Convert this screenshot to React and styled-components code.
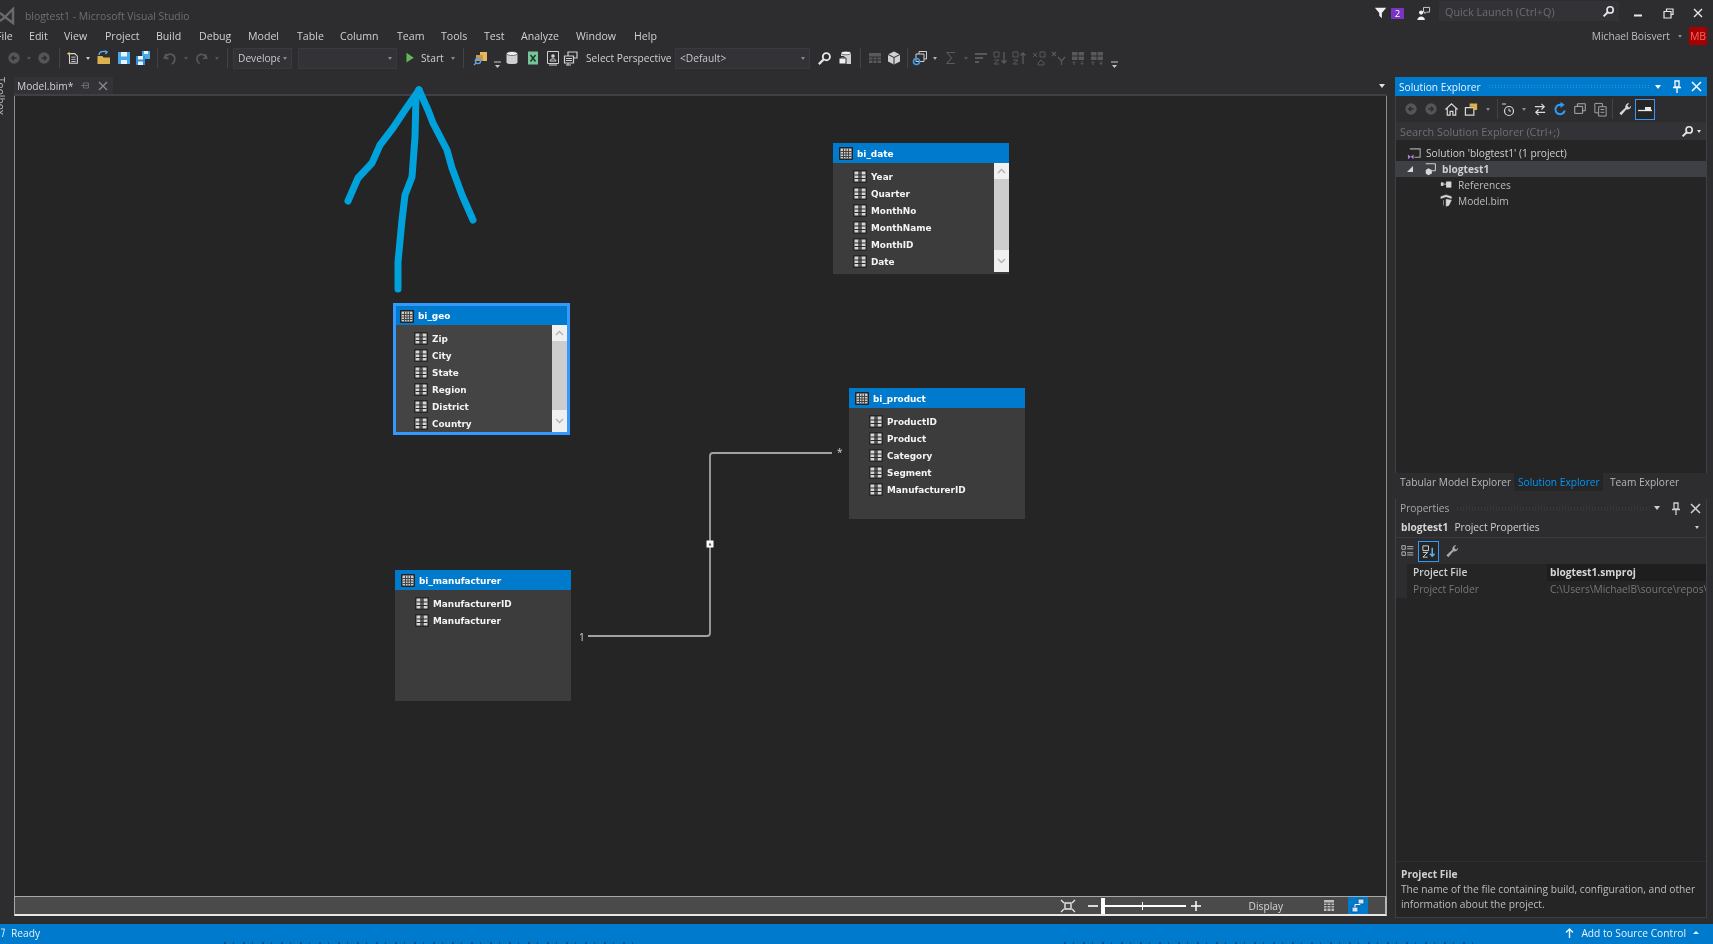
import React from 'react';
import styled, { createGlobalStyle } from 'styled-components';

const Global = createGlobalStyle`
  html, body { margin: 0; padding: 0; background: #2d2d30; overflow: hidden; }
  * { box-sizing: border-box; }
`

const Window = styled.div`
  position: relative;
  width: 1713px;
  height: 944px;
  display: flex;
  flex-direction: column;
  overflow: hidden;
  background: #2d2d30;
  color: #d0d0d0;
  font-family: "Open Sans", "Noto Sans", sans-serif;
  font-size: 10.2px;
  filter: blur(0.35px);
`

const TitleBar = styled.div`
  height: 26px;
  display: flex;
  align-items: center;
  flex-shrink: 0;
`

const Logo = styled.svg`
  width: 15px;
  height: 18px;
  margin: 6px 10px 0 0;
  flex-shrink: 0;
`

const AppTitle = styled.div`
  color: #6f6f72;
  font-size: 10.4px;
  margin-top: 6px;
  flex: 1;
`

const NotifyBadge = styled.span`
  width: 13px;
  height: 11px;
  margin: 0 12px 0 3px;
  background: #7b33c4;
  color: #fff;
  font-size: 9.5px;
  line-height: 11px;
  text-align: center;
`

const QuickLaunch = styled.div`
  width: 180px;
  height: 20px;
  margin: 0 0 4px 8px;
  padding: 0 4px 0 6px;
  display: flex;
  align-items: center;
  justify-content: space-between;
  background: #333337;
  color: #6d6d70;
  font-size: 10.8px;
`

const WindowButton = styled.div`
  width: 30px;
  height: 22px;
  display: flex;
  align-items: center;
  justify-content: center;
`

const MenuBar = styled.div`
  height: 20px;
  display: flex;
  align-items: center;
  flex-shrink: 0;
`

const MenuItem = styled.div`
  width: ${p => p.$w}px;
  color: #d0d0d0;
  font-size: 10.6px;
  white-space: nowrap;
`

const Account = styled.div`
  margin-left: auto;
  display: flex;
  align-items: center;
  margin-right: 6px;
  color: #bdbdbd;
`

const Avatar = styled.div`
  width: 18px;
  height: 18px;
  margin-left: 7px;
  background: #a80000;
  color: #ee6a62;
  font-size: 10.5px;
  line-height: 18px;
  text-align: center;
`

const Toolbar = styled.div`
  height: 24px;
  padding-left: 6px;
  display: flex;
  align-items: center;
  flex-shrink: 0;
`

const Slot = styled.div`
  width: ${p => p.$w}px;
  height: 20px;
  display: flex;
  align-items: center;
  justify-content: center;
  flex-shrink: 0;
`

const Sep = styled.div`
  width: ${p => p.$w || 8}px;
  height: 20px;
  flex-shrink: 0;
  display: flex;
  justify-content: center;
  &::after {
    content: '';
    width: 1px;
    background: #434346;
  }
`

const Caret = styled.span`
  width: 0;
  height: 0;
  flex-shrink: 0;
  border-left: 2.5px solid transparent;
  border-right: 2.5px solid transparent;
  border-top: 3px solid ${p => p.$c || '#8a8a8a'};
`

const Combo = styled.div`
  width: ${p => p.$w}px;
  height: 21px;
  margin-left: ${p => p.$ml || 0}px;
  padding: 0 4px 0 4px;
  display: flex;
  align-items: center;
  justify-content: space-between;
  flex-shrink: 0;
  background: #333337;
  border: 1px solid #3a3a3e;
  color: #c8c8c8;
  overflow: hidden;
`

const ToolLabel = styled.div`
  width: ${p => p.$w}px;
  flex-shrink: 0;
  color: #d0d0d0;
  white-space: nowrap;
`

const Main = styled.div`
  flex: 1;
  min-height: 0;
  display: flex;
  padding-top: 7px;
  padding-bottom: 6px;
`

const ToolboxStrip = styled.div`
  width: 14px;
  flex-shrink: 0;
  overflow: hidden;
  color: #bdbdbd;
  writing-mode: vertical-rl;
  padding-right: 6px;
`

const DocArea = styled.div`
  width: 1373px;
  margin-bottom: 2px;
  display: flex;
  flex-direction: column;
`

const TabStrip = styled.div`
  height: 19px;
  flex-shrink: 0;
  display: flex;
  align-items: flex-start;
  justify-content: space-between;
  border-bottom: 2px solid #3f3f46;
`

const DocTab = styled.div`
  width: 99px;
  height: 17px;
  padding-left: 3px;
  display: flex;
  align-items: center;
  gap: 7px;
  background: #333337;
  color: #d0d0d0;
`

const Canvas = styled.div`
  position: relative;
  flex: 1;
  background: #252525;
  border-left: 1px solid #8c8c8c;
  border-right: 1px solid #8c8c8c;
`

const ModelBar = styled.div`
  height: 20px;
  flex-shrink: 0;
  display: flex;
  align-items: center;
  background: #4a4a4a;
  border: 1px solid #a8a8a8;
  border-bottom: 2px solid #e6e6e6;
  border-right: 2px solid #b5b5b5;
  padding-right: 17px;
  justify-content: flex-end;
  color: #d6d6d6;
`

const Slider = styled.div`
  position: relative;
  width: 85px;
  height: 2px;
  margin: 0 3px 0 3px;
  background: #fff;
  &::before {
    content: '';
    position: absolute;
    left: 0;
    top: -7px;
    width: 4px;
    height: 16px;
    background: #fff;
  }
  &::after {
    content: '';
    position: absolute;
    left: 41px;
    top: -3px;
    width: 1px;
    height: 8px;
    background: #fff;
  }
`

const ViewButton = styled.div`
  width: 20px;
  height: 17px;
  margin-left: ${p => p.$ml || 0}px;
  display: flex;
  align-items: center;
  justify-content: center;
  background: ${p => (p.$active ? '#007acc' : 'transparent')};
`

const Node = styled.div`
  position: absolute;
  left: ${p => p.$x}px;
  top: ${p => p.$y}px;
  width: ${p => p.$w}px;
  height: ${p => p.$h}px;
  display: flex;
  flex-direction: column;
  border: ${p => (p.$selected ? '3px solid #3399ff' : 'none')};
  background: ${p => (p.$selected ? '#444' : '#3c3c3c')};
  font-family: "DejaVu Sans", sans-serif;
  font-size: 8.9px;
  font-weight: bold;
  color: #f4f4f4;
`

const NodeHeader = styled.div`
  height: ${p => (p.$selected ? 19 : 20)}px;
  flex-shrink: 0;
  display: flex;
  align-items: center;
  padding-left: ${p => (p.$selected ? 4 : 6)}px;
  padding-top: 1px;
  gap: 4px;
  background: #007acc;
  color: #fff;
`

const NodeBody = styled.div`
  flex: 1;
  min-height: 0;
  display: flex;
`

const FieldList = styled.div`
  flex: 1;
  padding: 5px 0 0 ${p => (p.$selected ? 18 : 20)}px;
`

const Field = styled.div`
  height: 17px;
  display: flex;
  align-items: center;
  gap: 4px;
  white-space: nowrap;
`

const ScrollBar = styled.div`
  width: 15px;
  margin-bottom: ${p => (p.$selected ? 0 : 2)}px;
  display: flex;
  flex-direction: column;
  justify-content: space-between;
  background: #cdcdcd;
  flex-shrink: 0;
`

const ScrollButton = styled.div`
  height: ${p => p.$h}px;
  display: flex;
  align-items: center;
  justify-content: center;
  background: #f0f0f0;
`

const Cardinality = styled.div`
  position: absolute;
  left: ${p => p.$x}px;
  top: ${p => p.$y}px;
  color: #d8d8d8;
  font-size: 10px;
  line-height: 12px;
`

const Overlay = styled.svg`
  position: absolute;
  left: ${p => p.$x}px;
  top: ${p => p.$y}px;
  pointer-events: none;
  overflow: visible;
`

const SidePanels = styled.div`
  width: 312px;
  margin-left: 8px;
  display: flex;
  flex-direction: column;
  flex-shrink: 0;
`

const PanelTitle = styled.div`
  height: ${p => p.$h}px;
  flex-shrink: 0;
  display: flex;
  align-items: center;
  gap: 6px;
  padding: 0 5px 0 4px;
  background: ${p => (p.$active ? '#007acc' : '#2d2d30')};
  color: ${p => (p.$active ? '#e8f4ff' : '#a8a8a8')};
  font-size: 10.2px;
`

const Grip = styled.div`
  flex: 1;
  height: 5px;
  margin-left: 1px;
  background-image: radial-gradient(${p => (p.$active ? '#3f9cda' : '#46464a')} 0.8px, transparent 0.9px);
  background-size: 3px 2.5px;
`

const ExplorerBox = styled.div`
  height: 377px;
  flex-shrink: 0;
  display: flex;
  flex-direction: column;
  border-left: 1px solid #3f3f46;
  border-right: 1px solid #3f3f46;
`

const PanelTools = styled.div`
  height: ${p => p.$h}px;
  flex-shrink: 0;
  display: flex;
  align-items: center;
  padding-left: ${p => p.$pl || 0}px;
  background: #2d2d30;
`

const SelectedTool = styled(Slot)`
  border: 1px solid #3399ff;
  background: #252526;
  height: 21px;
`

const SearchBox = styled.div`
  height: 18px;
  flex-shrink: 0;
  display: flex;
  align-items: center;
  justify-content: space-between;
  padding: 0 5px 0 4px;
  background: #333337;
  color: #707073;
  font-size: 10.8px;
`

const Tree = styled.div`
  flex: 1;
  background: #252526;
  padding-top: 5px;
`

const TreeRow = styled.div`
  height: 16px;
  display: flex;
  align-items: center;
  gap: 4px;
  padding-left: ${p => p.$indent}px;
  background: ${p => (p.$current ? '#3f3f46' : 'transparent')};
  color: ${p => (p.$dim ? '#bdbdbd' : '#d0d0d0')};
  font-weight: ${p => (p.$current ? 700 : 400)};
`

const ExplorerTabs = styled.div`
  height: 19px;
  flex-shrink: 0;
  display: flex;
  align-items: flex-start;
  padding-left: 1px;
`

const ExplorerTab = styled.div`
  width: ${p => p.$w}px;
  height: 18px;
  padding-left: ${p => p.$pl}px;
  line-height: 18px;
  color: ${p => (p.$active ? '#0097fb' : '#b8b8b8')};
  background: ${p => (p.$active ? '#252526' : '#2d2d30')};
  white-space: nowrap;
`

const PropertiesBox = styled.div`
  flex: 1;
  margin-top: 7px;
  display: flex;
  flex-direction: column;
  border-left: 1px solid #3f3f46;
  border-right: 1px solid #3f3f46;
  border-bottom: 1px solid #3f3f46;
  min-height: 0;
`

const ObjectPicker = styled.div`
  height: 21px;
  flex-shrink: 0;
  display: flex;
  align-items: center;
  gap: 6px;
  padding: 0 7px 0 5px;
  background: #2d2d30;
  border-bottom: 1px solid #3a3a3e;
  b { color: #d6d6d6; }
`

const Grid = styled.div`
  flex: 1;
  display: grid;
  grid-template-columns: 150px 1fr;
  grid-auto-rows: 17px;
  align-content: start;
  background: #252526;
`

const PropName = styled.div`
  padding-left: 17px;
  line-height: 17px;
  white-space: nowrap;
  background: linear-gradient(90deg, #2d2d30 11px, #252526 11px);
  color: ${p => (p.$dim ? '#777' : '#cfcfcf')};
  font-weight: ${p => (p.$dim ? 400 : 600)};
`

const PropValue = styled.div`
  padding-left: 3px;
  margin-left: 1px;
  line-height: 17px;
  overflow: hidden;
  white-space: nowrap;
  background: ${p => (p.$dim ? '#252526' : '#1e1e1e')};
  color: ${p => (p.$dim ? '#777' : '#d6d6d6')};
  font-weight: ${p => (p.$dim ? 400 : 700)};
`

const Description = styled.div`
  height: 56px;
  flex-shrink: 0;
  padding: 5px 5px 0 5px;
  background: #252526;
  border-top: 1px solid #2f2f33;
  line-height: 14.5px;
  color: #bdbdbd;
  b { display: block; color: #d0d0d0; line-height: 15px; }
`

const StatusBar = styled.div`
  position: relative;
  height: 20px;
  flex-shrink: 0;
  display: flex;
  align-items: center;
  justify-content: space-between;
  padding: 0 14px 3px 1px;
  background: #007acc;
  color: #e6f3fb;
`

const StatusLeft = styled.div`
  display: flex;
  align-items: center;
  gap: 6px;
`

const SourceControl = styled.div`
  display: flex;
  align-items: center;
  gap: 7px;
`

const ClippedLine = styled.div`
  position: absolute;
  left: ${p => p.$x}px;
  bottom: 0;
  width: ${p => p.$w}px;
  height: 2px;
  background: repeating-linear-gradient(90deg, #0d4f80 0 2px, transparent 2px 9px, #0d4f80 9px 10px, transparent 10px 19px);
`

const Svg = ({ size = 16, vb = '0 0 16 16', children }) => (
  <svg width={size} height={size} viewBox={vb} fill="none">{children}</svg>
)

const Circle = ({ dir }) => (
  <Svg size={14}>
    <circle cx="8" cy="8" r="6.5" fill="#555558" />
    <path d={dir === 'left' ? 'M11 8H6M8 5.5L5.5 8 8 10.5' : 'M5 8h5M8 5.5L10.5 8 8 10.5'} stroke="#2d2d30" strokeWidth="1.6" />
  </Svg>
)

const NewProject = () => (
  <Svg>
    <path d="M4 3h6l3 3v8H4z" fill="#2d2d30" stroke="#d8d8d8" strokeWidth="1.2" />
    <path d="M6 7h5M6 9.5h5M6 12h5" stroke="#d8d8d8" />
    <path d="M3.5 1v4M1.5 3h4" stroke="#e8c070" strokeWidth="1.2" />
  </Svg>
)

const OpenFolder = () => (
  <Svg>
    <path d="M1.5 6h5l1 1.5h6.5v6.5h-12.5z" fill="#dcb14e" />
    <path d="M3 5c0-3 3-4 6-3.5M9 1l2 1-1.5 2" stroke="#58b4e8" strokeWidth="1.4" />
  </Svg>
)

const Floppy = () => (
  <Svg>
    <path d="M2 2h12v12H2z" fill="#4aa8e8" />
    <path d="M5 2h6v4.5H5zM5 10h6v4H5z" fill="#e8f4ff" />
  </Svg>
)

const FloppyAll = () => (
  <Svg>
    <path d="M7 1h8v8H7z" fill="#4aa8e8" />
    <path d="M9 1h4v3H9z" fill="#e8f4ff" />
    <path d="M1 6h9v9H1z" fill="#2f8fd8" />
    <path d="M3 6h5v3.500H3zM3 11.500h5V15H3z" fill="#e8f4ff" />
  </Svg>
)

const Turn = ({ flip }) => (
  <Svg>
    <path
      d={flip ? 'M12 4l1.500 4-4 .5M13 8c-1-4-6-5-8.500-2.500S3 12 6 14' : 'M4 4l-1.500 4 4 .5M3 8c1-4 6-5 8.500-2.500S13 12 10 14'}
      stroke="#59595c"
      strokeWidth="1.8"
    />
  </Svg>
)

const Play = () => (
  <Svg size={13}>
    <path d="M3 1l9 6-9 6z" fill="#63b657" />
  </Svg>
)

const OverflowMark = () => (
  <Slot $w={16} style={{ alignItems: 'flex-end' }}>
    <svg width="8" height="8" viewBox="0 0 8 8">
      <path d="M0 2h7" stroke="#c8c8c8" />
      <path d="M1 5h5L3.500 8z" fill="#c8c8c8" />
    </svg>
  </Slot>
)

const ProcessIcon = () => (
  <Svg>
    <path d="M7 2h7v9H7z" fill="#e8b860" />
    <path d="M3 5h7v6H3z" fill="#c89848" />
    <circle cx="5" cy="11" r="2.600" stroke="#58a4e8" strokeWidth="1.400" />
    <path d="M3 13l-2 2" stroke="#58a4e8" strokeWidth="1.400" />
  </Svg>
)

const Database = () => (
  <Svg>
    <path d="M2.500 3.500v9c0 2 11 2 11 0v-9z" fill="#d0d0d0" />
    <ellipse cx="8" cy="3.500" rx="5.500" ry="2" fill="#f0f0f0" stroke="#2d2d30" strokeWidth=".6" />
  </Svg>
)

const Excel = () => (
  <Svg>
    <path d="M3 1.500h10v13H3z" fill="#77c49a" />
    <path d="M5.500 5l5 6.500M10.500 5l-5 6.500" stroke="#1e3a2a" strokeWidth="1.500" />
  </Svg>
)

const Screen = () => (
  <Svg>
    <path d="M2.500 1.500h11v12h-11z" stroke="#d0d0d0" />
    <circle cx="8" cy="6" r="1.800" fill="#d0d0d0" />
    <path d="M5 11c0-3 6-3 6 0zM4 15h8" stroke="#d0d0d0" />
  </Svg>
)

const Stack = () => (
  <Svg>
    <path d="M5 2h9v6H5z" stroke="#d0d0d0" strokeWidth="1.200" />
    <path d="M1.500 6h9v7h-9z" fill="#2d2d30" stroke="#d0d0d0" strokeWidth="1.200" />
    <path d="M3 8.500h6M3 10.500h6M5 13v2M3 15h5" stroke="#d0d0d0" />
  </Svg>
)

const Magnifier = ({ c = '#e6e6e6', size = 15 }) => (
  <Svg size={size}>
    <circle cx="10" cy="6" r="3.800" stroke={c} strokeWidth="2" />
    <path d="M7 9l-5 5" stroke={c} strokeWidth="2.400" />
  </Svg>
)

const DbLock = () => (
  <Svg>
    <path d="M3 3h10v11H3z" fill="#d0d0d0" />
    <ellipse cx="8" cy="3" rx="5" ry="1.800" fill="#f0f0f0" stroke="#2d2d30" strokeWidth=".6" />
    <path d="M1 8h7v6H1z" fill="#f0f0f0" stroke="#2d2d30" />
    <path d="M3 8V6.500h3V8" stroke="#2d2d30" />
  </Svg>
)

const DimGrid = () => (
  <Svg>
    <path d="M2 3h12v10H2z" fill="#5a5a5d" />
    <path d="M2 7h12M2 10h12M6 7v6M10 7v6" stroke="#2d2d30" />
  </Svg>
)

const Cube = () => (
  <Svg>
    <path d="M8 1.500l6 3v7l-6 3-6-3v-7z" fill="#d0d0d0" />
    <path d="M2 4.500l6 3 6-3M8 7.500v7" stroke="#2d2d30" />
  </Svg>
)

const Layers = () => (
  <Svg>
    <path d="M7 1.500h7.500V9H7z" stroke="#d0d0d0" />
    <path d="M4 4h8v7.500H4z" fill="#2d2d30" stroke="#d0d0d0" />
    <circle cx="4.500" cy="11.500" r="3" stroke="#3f9ae8" strokeWidth="1.600" />
  </Svg>
)

const Sigma = () => (
  <Svg>
    <path d="M12 2.500H4l4.500 5.500L4 13.500h8" stroke="#59595c" strokeWidth="1.100" />
  </Svg>
)

const DimBars = () => (
  <Svg>
    <path d="M2 4h12M2 8h8M2 12h4" stroke="#59595c" strokeWidth="2" />
  </Svg>
)

const DimSort = ({ flip }) => (
  <Svg>
    <path d="M2 2h5v5H2z" stroke="#59595c" />
    <path d="M2 10h5l-5 4h5" stroke="#59595c" />
    <path d={flip ? 'M12 14V3M9.500 5.500L12 3l2.500 2.500' : 'M12 2v11M9.500 10.500L12 13l2.500-2.500'} stroke="#59595c" strokeWidth="1.400" />
  </Svg>
)

const DimXY = () => (
  <Svg>
    <path d="M2 3l4 4M6 3L2 7M9 2h5v5H9zM7 13l3-3 3 3v2H7z" stroke="#59595c" />
  </Svg>
)

const DimY = () => (
  <Svg>
    <path d="M2 2l4 4M6 2L2 6M8 7l3.500 4L15 7M11.500 11v4" stroke="#59595c" strokeWidth="1.200" />
  </Svg>
)

const DimTable = () => (
  <Svg>
    <path d="M2 2h12v8H2z" fill="#59595c" />
    <path d="M2 6h12M8 2v8" stroke="#2d2d30" />
    <path d="M4 15v-3M2.500 13L4 11.500 5.500 13M12 11v3M10.500 13l1.500 1.500 1.500-1.500" stroke="#59595c" />
  </Svg>
)

const Filter = () => (
  <Svg size={14}>
    <path d="M1 2h13L9 8v6L6 11V8z" fill="#f0f0f0" />
  </Svg>
)

const Person = () => (
  <Svg size={15}>
    <circle cx="5.500" cy="7" r="2.300" fill="#f0f0f0" />
    <path d="M1.500 15c0-5 8-5 8 0z" fill="#f0f0f0" />
    <path d="M8 1.500h6.500v5H11l-1.500 1.500V6.500H8z" stroke="#d0d0d0" />
  </Svg>
)

// dark frame, two light columns and a darker one between them
const ColumnIcon = () => (
  <svg width="14" height="13" viewBox="0 0 14 13" style={{ flexShrink: 0 }}>
    <rect width="14" height="13" rx="1" fill="#262626" />
    <path d="M1.500 1.500h4v10h-4zM8.500 1.500h4v10h-4z" fill="#d6d6d6" />
    <path d="M5.500 1.500h3v10h-3z" fill="#555" />
    <path d="M1.500 5h11M1.500 8.500h11" stroke="#2a2a2a" />
  </svg>
)

const TableIcon = () => (
  <svg width="14" height="13" viewBox="0 0 14 13" style={{ flexShrink: 0 }}>
    <rect width="14" height="13" rx="1" fill="#222" />
    <rect x="1.500" y="1.500" width="11" height="10" fill="#cfcfcf" />
    <path d="M1.500 4.500h11M1.500 7h11M1.500 9.500h11M4.500 1.500v10M7 1.500v10M9.500 1.500v10" stroke="#444" />
  </svg>
)

const Chevron = ({ down }) => (
  <svg width="9" height="6" viewBox="0 0 9 6">
    <path d={down ? 'M1 1l3.500 3.500L8 1' : 'M1 5l3.500-3.500L8 5'} stroke="#b0b0b0" strokeWidth="1.300" fill="none" />
  </svg>
)

const PanelButtons = ({ c }) => (
  <>
    <Caret $c={c} style={{ borderWidth: '4px 3.500px 0' }} />
    <svg width="12" height="13" viewBox="0 0 12 13" style={{ margin: '0 0 0 4px' }}>
      <path d="M4 1h4v6H4zM2 7.500h8M6 8v5" stroke={c} strokeWidth="1.300" fill="none" />
    </svg>
    <svg width="11" height="11" viewBox="0 0 11 11" style={{ margin: '0 0 0 2px' }}>
      <path d="M1 1l9 9M10 1l-9 9" stroke={c} strokeWidth="1.500" />
    </svg>
  </>
)

const ModelTable = ({ name, fields, x, y, h = 131, w = 176, scroll, selected }) => (
  <Node $x={x - 15} $y={y - 96} $w={w} $h={h} $selected={selected}>
    <NodeHeader $selected={selected}><TableIcon />{name}</NodeHeader>
    <NodeBody>
      <FieldList $selected={selected}>
        {fields.map(f => <Field key={f}><ColumnIcon />{f}</Field>)}
      </FieldList>
      {scroll && (
        <ScrollBar $selected={selected}>
          <ScrollButton $h={16}><Chevron /></ScrollButton>
          <ScrollButton $h={22}><Chevron down /></ScrollButton>
        </ScrollBar>
      )}
    </NodeBody>
  </Node>
)

const menus = [
  ['File', 33], ['Edit', 35], ['View', 41], ['Project', 51], ['Build', 43], ['Debug', 49], ['Model', 49],
  ['Table', 43], ['Column', 57], ['Team', 44], ['Tools', 43], ['Test', 37], ['Analyze', 55], ['Window', 58], ['Help', 40],
]

function App() {
  return (
    <Window>
      <Global />

      <TitleBar>
        <Logo viewBox="0 0 15 18">
          <path d="M0 6l5 4 8-8v14L5 10 0 14" stroke="#6a6a6d" strokeWidth="2.400" fill="none" />
        </Logo>
        <AppTitle>blogtest1 - Microsoft Visual Studio</AppTitle>
        <Filter />
        <NotifyBadge>2</NotifyBadge>
        <Person />
        <QuickLaunch>Quick Launch (Ctrl+Q)<Magnifier size={13} /></QuickLaunch>
        <WindowButton style={{ marginLeft: 4 }}>
          <svg width="10" height="10" viewBox="0 0 10 10"><path d="M1 7.500h8" stroke="#e8e8e8" strokeWidth="2" /></svg>
        </WindowButton>
        <WindowButton>
          <svg width="11" height="11" viewBox="0 0 11 11" fill="none"><path d="M3.500 3V1h6.500v5.500H8M1 3.500h7v6.500H1z" stroke="#e8e8e8" strokeWidth="1.200" /></svg>
        </WindowButton>
        <WindowButton>
          <svg width="10" height="10" viewBox="0 0 10 10"><path d="M1 1l8 8M9 1L1 9" stroke="#e8e8e8" strokeWidth="1.400" /></svg>
        </WindowButton>
      </TitleBar>

      <MenuBar>
        {menus.map(([label, w], i) => (
          <MenuItem key={label} $w={w} style={i === 0 ? { marginLeft: -4 } : undefined}>{label}</MenuItem>
        ))}
        <Account>
          Michael Boisvert
          <Caret style={{ marginLeft: 8 }} />
          <Avatar>MB</Avatar>
        </Account>
      </MenuBar>

      <Toolbar>
        <Slot $w={16}><Circle dir="left" /></Slot>
        <Slot $w={14}><Caret $c="#555" /></Slot>
        <Slot $w={16}><Circle dir="right" /></Slot>
        <Sep $w={14} />
        <Slot $w={14}><NewProject /></Slot>
        <Slot $w={15}><Caret $c="#c8c8c8" /></Slot>
        <Slot $w={18}><OpenFolder /></Slot>
        <Slot $w={21}><Floppy /></Slot>
        <Slot $w={18}><FloppyAll /></Slot>
        <Sep $w={10} />
        <Slot $w={16}><Turn /></Slot>
        <Slot $w={16}><Caret $c="#555" /></Slot>
        <Slot $w={15}><Turn flip /></Slot>
        <Slot $w={15}><Caret $c="#555" /></Slot>
        <Sep $w={6} />
        <Combo $w={59} $ml={3}><span style={{ width: 42, overflow: 'hidden' }}>Developer</span><Caret /></Combo>
        <Combo $w={99} $ml={6}><span /><Caret /></Combo>
        <Slot $w={22} style={{ marginLeft: 2 }}><Play /></Slot>
        <ToolLabel $w={30}>Start</ToolLabel>
        <Caret />
        <Sep $w={17} />
        <Slot $w={18}><ProcessIcon /></Slot>
        <OverflowMark />
        <Slot $w={22} style={{ marginLeft: -5 }}><Database /></Slot>
        <Slot $w={20}><Excel /></Slot>
        <Slot $w={19}><Screen /></Slot>
        <Slot $w={18}><Stack /></Slot>
        <ToolLabel $w={89} style={{ marginLeft: 6 }}>Select Perspective</ToolLabel>
        <Combo $w={135}>{'<Default>'}<Caret /></Combo>
        <Slot $w={24} style={{ marginLeft: 2 }}><Magnifier /></Slot>
        <Slot $w={20}><DbLock /></Slot>
        <Sep $w={9} />
        <Slot $w={20}><DimGrid /></Slot>
        <Slot $w={18}><Cube /></Slot>
        <Sep $w={8} />
        <Slot $w={18}><Layers /></Slot>
        <Slot $w={12}><Caret $c="#b0b0b0" /></Slot>
        <Slot $w={19}><Sigma /></Slot>
        <Slot $w={11}><Caret $c="#555" /></Slot>
        <Slot $w={19}><DimBars /></Slot>
        <Slot $w={19.5}><DimSort /></Slot>
        <Slot $w={19.5}><DimSort flip /></Slot>
        <Slot $w={19.5}><DimXY /></Slot>
        <Slot $w={19.5}><DimY /></Slot>
        <Slot $w={19.5}><DimTable /></Slot>
        <Slot $w={19.5}><DimTable /></Slot>
        <OverflowMark />
      </Toolbar>

      <Main>
        <ToolboxStrip>Toolbox</ToolboxStrip>

        <DocArea>
          <TabStrip>
            <DocTab>
              Model.bim*
              <svg width="11" height="11" viewBox="0 0 11 11"><path d="M1 5.500h2M3.500 3h5v5h-5zM3.500 5.500h5" stroke="#6a6a6e" fill="none" /></svg>
              <svg width="10" height="10" viewBox="0 0 10 10"><path d="M1 1l8 8M9 1L1 9" stroke="#8a8a8e" strokeWidth="1.300" /></svg>
            </DocTab>
            <Caret $c="#e0e0e0" style={{ marginTop: 7, marginRight: 2, borderWidth: '4px 3.500px 0' }} />
          </TabStrip>

          <Canvas>
            <Overlay $x={1} $y={0} width="1370" height="640">
              <path d="M572 540H691Q694 540 694 537V360Q694 357 697 357H816" stroke="#a2a2a2" strokeWidth="1.800" fill="none" />
              <rect x="690.500" y="444.500" width="7" height="7" fill="#fff" />
              <path d="M692.500 449.500l1.500-3 1.500 3z" fill="#555" />
            </Overlay>
            <Cardinality $x={564} $y={535}>1</Cardinality>
            <Cardinality $x={822} $y={350}>*</Cardinality>

            <ModelTable name="bi_date" x={833} y={143} scroll fields={['Year', 'Quarter', 'MonthNo', 'MonthName', 'MonthID', 'Date']} />
            <ModelTable name="bi_geo" x={393} y={303} w={177} h={132} scroll selected fields={['Zip', 'City', 'State', 'Region', 'District', 'Country']} />
            <ModelTable name="bi_product" x={849} y={388} fields={['ProductID', 'Product', 'Category', 'Segment', 'ManufacturerID']} />
            <ModelTable name="bi_manufacturer" x={395} y={570} fields={['ManufacturerID', 'Manufacturer']} />

            {/* the hand drawn arrow, it pokes up over the tab strip */}
            <Overlay $x={0} $y={0} width="500" height="220">
              <g transform="translate(315 -16)" stroke="#00a2dc" strokeWidth="7" strokeLinecap="round" strokeLinejoin="round" fill="none">
                <path d="M68 209V182L72 140L75 115L82 97L85 57L86 17L89 10" />
                <path d="M18 121L28 98L42 83L50 65L63 48L75 30L89 10" />
                <path d="M89 10L98 30L103 43L117 70L122 88L132 115L143 140" />
              </g>
            </Overlay>
          </Canvas>

          <ModelBar>
            <svg width="16" height="14" viewBox="0 0 16 14" fill="none" style={{ marginRight: 12 }}>
              <path d="M1 1l3 3M15 1l-3 3M1 13l3-3M15 13l-3-3" stroke="#e8e8e8" strokeWidth="1.200" />
              <path d="M5 4h6v6H5z" stroke="#e8e8e8" strokeWidth="1.400" />
            </svg>
            <svg width="10" height="10" viewBox="0 0 10 10"><path d="M0 5h10" stroke="#fff" strokeWidth="1.600" /></svg>
            <Slider />
            <svg width="10" height="10" viewBox="0 0 10 10" style={{ marginLeft: 2 }}><path d="M0 5h10M5 0v10" stroke="#fff" strokeWidth="1.500" /></svg>
            <span style={{ margin: '0 36px 0 48px' }}>Display</span>
            <ViewButton>
              <svg width="12" height="13" viewBox="0 0 12 13"><path d="M1 1h10v11H1z" fill="#bdbdbd" /><path d="M1 4h10M1 6.500h10M1 9h10M4 4v8M8 4v8" stroke="#4a4a4a" /></svg>
            </ViewButton>
            <ViewButton $active $ml={9}>
              <svg width="14" height="15" viewBox="0 0 14 15" fill="none"><path d="M7 1h6v5H7zM1 9h6v5H1z" fill="#cfe6f6" stroke="#0a5f9c" /><path d="M4 9V6.500h5V6" stroke="#fff" /></svg>
            </ViewButton>
          </ModelBar>
        </DocArea>

        <SidePanels>
          <PanelTitle $h={19} $active>
            Solution Explorer
            <Grip $active />
            <PanelButtons c="#fff" />
          </PanelTitle>

          <ExplorerBox>
            <PanelTools $h={26} $pl={5}>
              <Slot $w={20}><Circle dir="left" /></Slot>
              <Slot $w={20}><Circle dir="right" /></Slot>
              <Slot $w={20}>
                <Svg size={15}><path d="M1.500 8L8 2l6.500 6M3.500 7v7h3v-4h3v4h3V7" stroke="#d8d8d8" strokeWidth="1.300" /></Svg>
              </Slot>
              <Slot $w={20}>
                <Svg size={15}><path d="M1.500 6h9v8h-9z" stroke="#d8d8d8" strokeWidth="1.300" /><path d="M6 1.500h8v7H10V5H6z" fill="#dcb14e" /></Svg>
              </Slot>
              <Slot $w={14}><Caret /></Slot>
              <Sep $w={4} />
              <Slot $w={18}>
                <Svg size={16}><circle cx="9" cy="10" r="4.500" stroke="#d8d8d8" strokeWidth="1.200" /><path d="M9 7.500V10h2M2 3h4" stroke="#d8d8d8" /></Svg>
              </Slot>
              <Slot $w={13}><Caret /></Slot>
              <Slot $w={20}>
                <Svg size={15}><path d="M2 5h10M9 2l3 3-3 3M13 11H3M6 8l-3 3 3 3" stroke="#d8d8d8" strokeWidth="1.300" /></Svg>
              </Slot>
              <Slot $w={20}>
                <Svg size={15}><path d="M12.500 9A5 5 0 1 1 9 3.200" stroke="#2e9cef" strokeWidth="2.200" /><path d="M8 0l4.500 3L8 6.500z" fill="#2e9cef" /></Svg>
              </Slot>
              <Slot $w={20}>
                <Svg size={14}><path d="M5 2h9v8H5z" stroke="#bdbdbd" /><path d="M2 5h9v8H2z" fill="#2d2d30" stroke="#bdbdbd" /></Svg>
              </Slot>
              <Slot $w={20}>
                <Svg size={15}><path d="M2 1.500h8v10H2z" stroke="#a8a8a8" /><path d="M6 5h8v10H6z" fill="#2d2d30" stroke="#a8a8a8" /><path d="M8 8h4M8 11h4" stroke="#a8a8a8" /></Svg>
              </Slot>
              <Sep $w={5} />
              <Slot $w={20}>
                <Svg size={15}><path d="M14 4a3.800 3.800 0 0 1-5 3.800L3.500 14 1.500 12 7.800 6A3.800 3.800 0 0 1 12 1.500L9.800 3.800 11.800 6z" fill="#d8d8d8" /></Svg>
              </Slot>
              <SelectedTool $w={20}>
                <svg width="14" height="6" viewBox="0 0 14 6"><path d="M0 4.500h14" stroke="#e8e8e8" strokeWidth="1.300" /><path d="M7 1h6v3H7z" fill="#e8e8e8" /></svg>
              </SelectedTool>
            </PanelTools>
            <SearchBox>
              Search Solution Explorer (Ctrl+;)
              <span style={{ display: 'flex', alignItems: 'center', gap: 3 }}>
                <Magnifier size={13} />
                <Caret $c="#e0e0e0" />
              </span>
            </SearchBox>
            <Tree>
              <TreeRow $indent={11}>
                <Svg size={15}>
                  <path d="M3 3h11v9H8" stroke="#a8a8a8" strokeWidth="1.200" />
                  <path d="M1 9l3 2.500L7 9v5l-3-2.500L1 14z" fill="#b180d7" />
                </Svg>
                Solution 'blogtest1' (1 project)
              </TreeRow>
              <TreeRow $indent={11} $current>
                <svg width="6" height="6" viewBox="0 0 6 6" style={{ marginRight: 7 }}><path d="M6 0v6H0z" fill="#d8d8d8" /></svg>
                <Svg size={14}>
                  <path d="M2 2h11v8H9" stroke="#d8d8d8" strokeWidth="1.100" />
                  <path d="M5 7l4 2v4l-4 2-3-2V9z" fill="#d8d8d8" />
                </Svg>
                blogtest1
              </TreeRow>
              <TreeRow $indent={44} $dim>
                <Svg size={14}>
                  <path d="M7 4h6v7H7z" fill="#d8d8d8" />
                  <path d="M1 5h3v4H1z" fill="#d8d8d8" />
                  <path d="M4 7h3" stroke="#d8d8d8" />
                </Svg>
                References
              </TreeRow>
              <TreeRow $indent={44} $dim>
                <Svg size={14}>
                  <path d="M1 3l6-2 6 2v2L7 3 1 5zM7 6l6 1-3 6-3 1zM4 7v6" stroke="#d8d8d8" fill="#d8d8d8" strokeWidth=".6" />
                </Svg>
                Model.bim
              </TreeRow>
            </Tree>
          </ExplorerBox>

          <ExplorerTabs>
            <ExplorerTab $w={118} $pl={4}>Tabular Model Explorer</ExplorerTab>
            <ExplorerTab $active $w={89} $pl={4}>Solution Explorer</ExplorerTab>
            <ExplorerTab $w={90} $pl={7}>Team Explorer</ExplorerTab>
          </ExplorerTabs>

          <PropertiesBox>
            <PanelTitle $h={18}>
              Properties
              <Grip />
              <PanelButtons c="#d0d0d0" />
            </PanelTitle>
            <ObjectPicker>
              <b>blogtest1</b> Project Properties
              <Caret $c="#d0d0d0" style={{ marginLeft: 'auto' }} />
            </ObjectPicker>
            <PanelTools $h={26} $pl={2}>
              <Slot $w={20}>
                <Svg size={14}><path d="M1 2h4v4H1zM1 9h4v4H1zM7 3h7M7 5.500h7M7 10h7M7 12.500h7" stroke="#c0c0c0" /></Svg>
              </Slot>
              <SelectedTool $w={21}>
                <Svg size={15}><path d="M2 2h6v5H2zM2 9h5l-5 5h5" stroke="#d8d8d8" /><path d="M12 4v9M9.500 10.500L12 13l2.500-2.500" stroke="#58b4e8" strokeWidth="1.600" /></Svg>
              </SelectedTool>
              <Slot $w={26}>
                <Svg size={15}><path d="M14 4a3.800 3.800 0 0 1-5 3.800L3.500 14 1.500 12 7.800 6A3.800 3.800 0 0 1 12 1.500L9.800 3.800 11.800 6z" fill="#a8a8a8" /></Svg>
              </Slot>
            </PanelTools>
            <Grid>
              <PropName>Project File</PropName>
              <PropValue>blogtest1.smproj</PropValue>
              <PropName $dim>Project Folder</PropName>
              <PropValue $dim>C:\Users\MichaelB\source\repos\blogtest1\blogtest1</PropValue>
            </Grid>
            <Description>
              <b>Project File</b>
              The name of the file containing build, configuration, and other information about the project.
            </Description>
          </PropertiesBox>
        </SidePanels>
      </Main>

      <StatusBar>
        <StatusLeft>
          <svg width="4" height="9" viewBox="0 0 4 9"><path d="M0 1h3.500L1.500 9" stroke="#cfe6f6" fill="none" /></svg>
          Ready
        </StatusLeft>
        <SourceControl>
          <svg width="9" height="10" viewBox="0 0 9 10"><path d="M4.500 10V2M1 4.500L4.500 1 8 4.500" stroke="#e6f3fb" strokeWidth="1.400" fill="none" /></svg>
          Add to Source Control
          <Caret $c="#e6f3fb" style={{ transform: 'rotate(180deg)', borderWidth: '3.500px 3.500px 0' }} />
        </SourceControl>
        <ClippedLine $x={224} $w={416} />
        <ClippedLine $x={1064} $w={416} />
      </StatusBar>
    </Window>
  )
}

export default App
